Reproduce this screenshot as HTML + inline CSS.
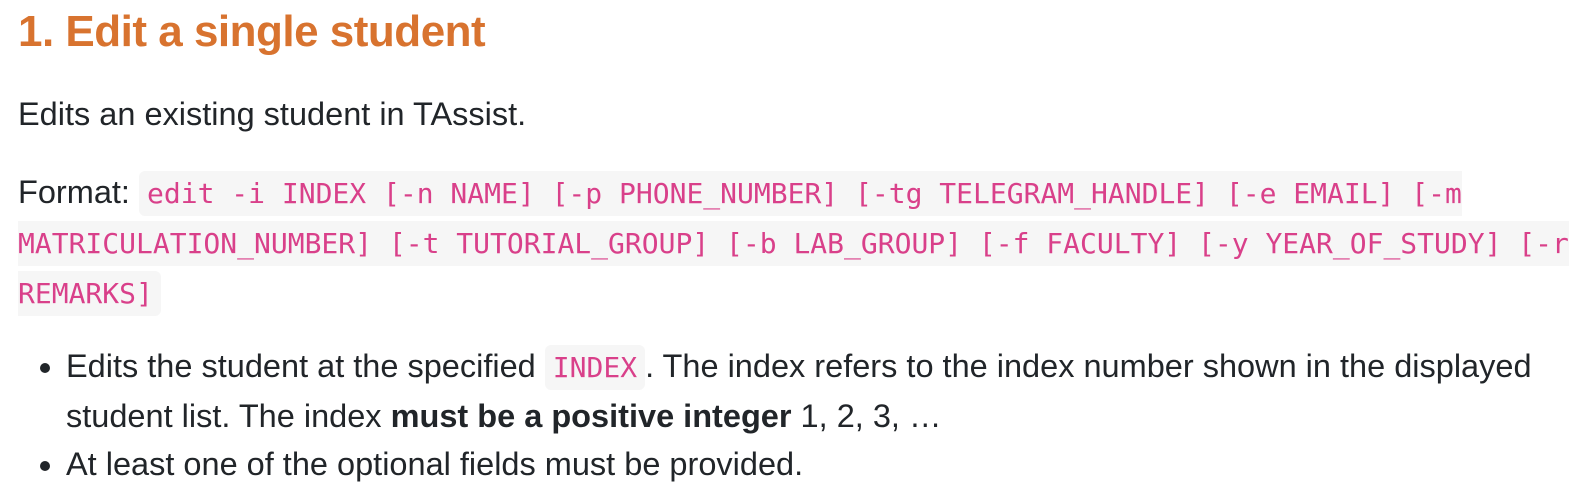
<!DOCTYPE html>
<html><head><meta charset="utf-8"><style>
body{margin:0;background:#fff;width:1588px;height:498px;overflow:hidden;font-family:"Liberation Sans",sans-serif;color:#212529;}
h1{position:absolute;left:18px;top:4px;margin:0;font-size:44px;font-weight:bold;color:#d8732f;letter-spacing:-0.5px;line-height:56px;}
p{margin:0;position:absolute;left:18px;font-size:32.5px;}
code{font-family:"DejaVu Sans Mono","Liberation Mono",monospace;font-size:28px;color:#d9408a;background:#f6f6f6;border-radius:6px;padding:6px 8px;}
.fmt{top:168px;width:1552px;line-height:48px;}
ul{position:absolute;left:0;top:342px;margin:0;padding:0 0 0 66px;font-size:32.5px;line-height:48px;width:1480px;}
li{margin:0;}
</style></head><body>
<h1>1. Edit a single student</h1>
<p style="top:94px;line-height:40px">Edits an existing student in TAssist.</p>
<p class="fmt">Format: <code>edit -i INDEX [-n NAME] [-p PHONE_NUMBER] [-tg TELEGRAM_HANDLE] [-e EMAIL] [-m MATRICULATION_NUMBER] [-t TUTORIAL_GROUP] [-b LAB_GROUP] [-f FACULTY] [-y YEAR_OF_STUDY] [-r REMARKS]</code></p>
<ul>
<li>Edits the student at the specified <code>INDEX</code>. The index refers to the index number shown in the displayed student list. The index <b>must be a positive integer</b> 1, 2, 3, …</li>
<li>At least one of the optional fields must be provided.</li>
</ul>
</body></html>
